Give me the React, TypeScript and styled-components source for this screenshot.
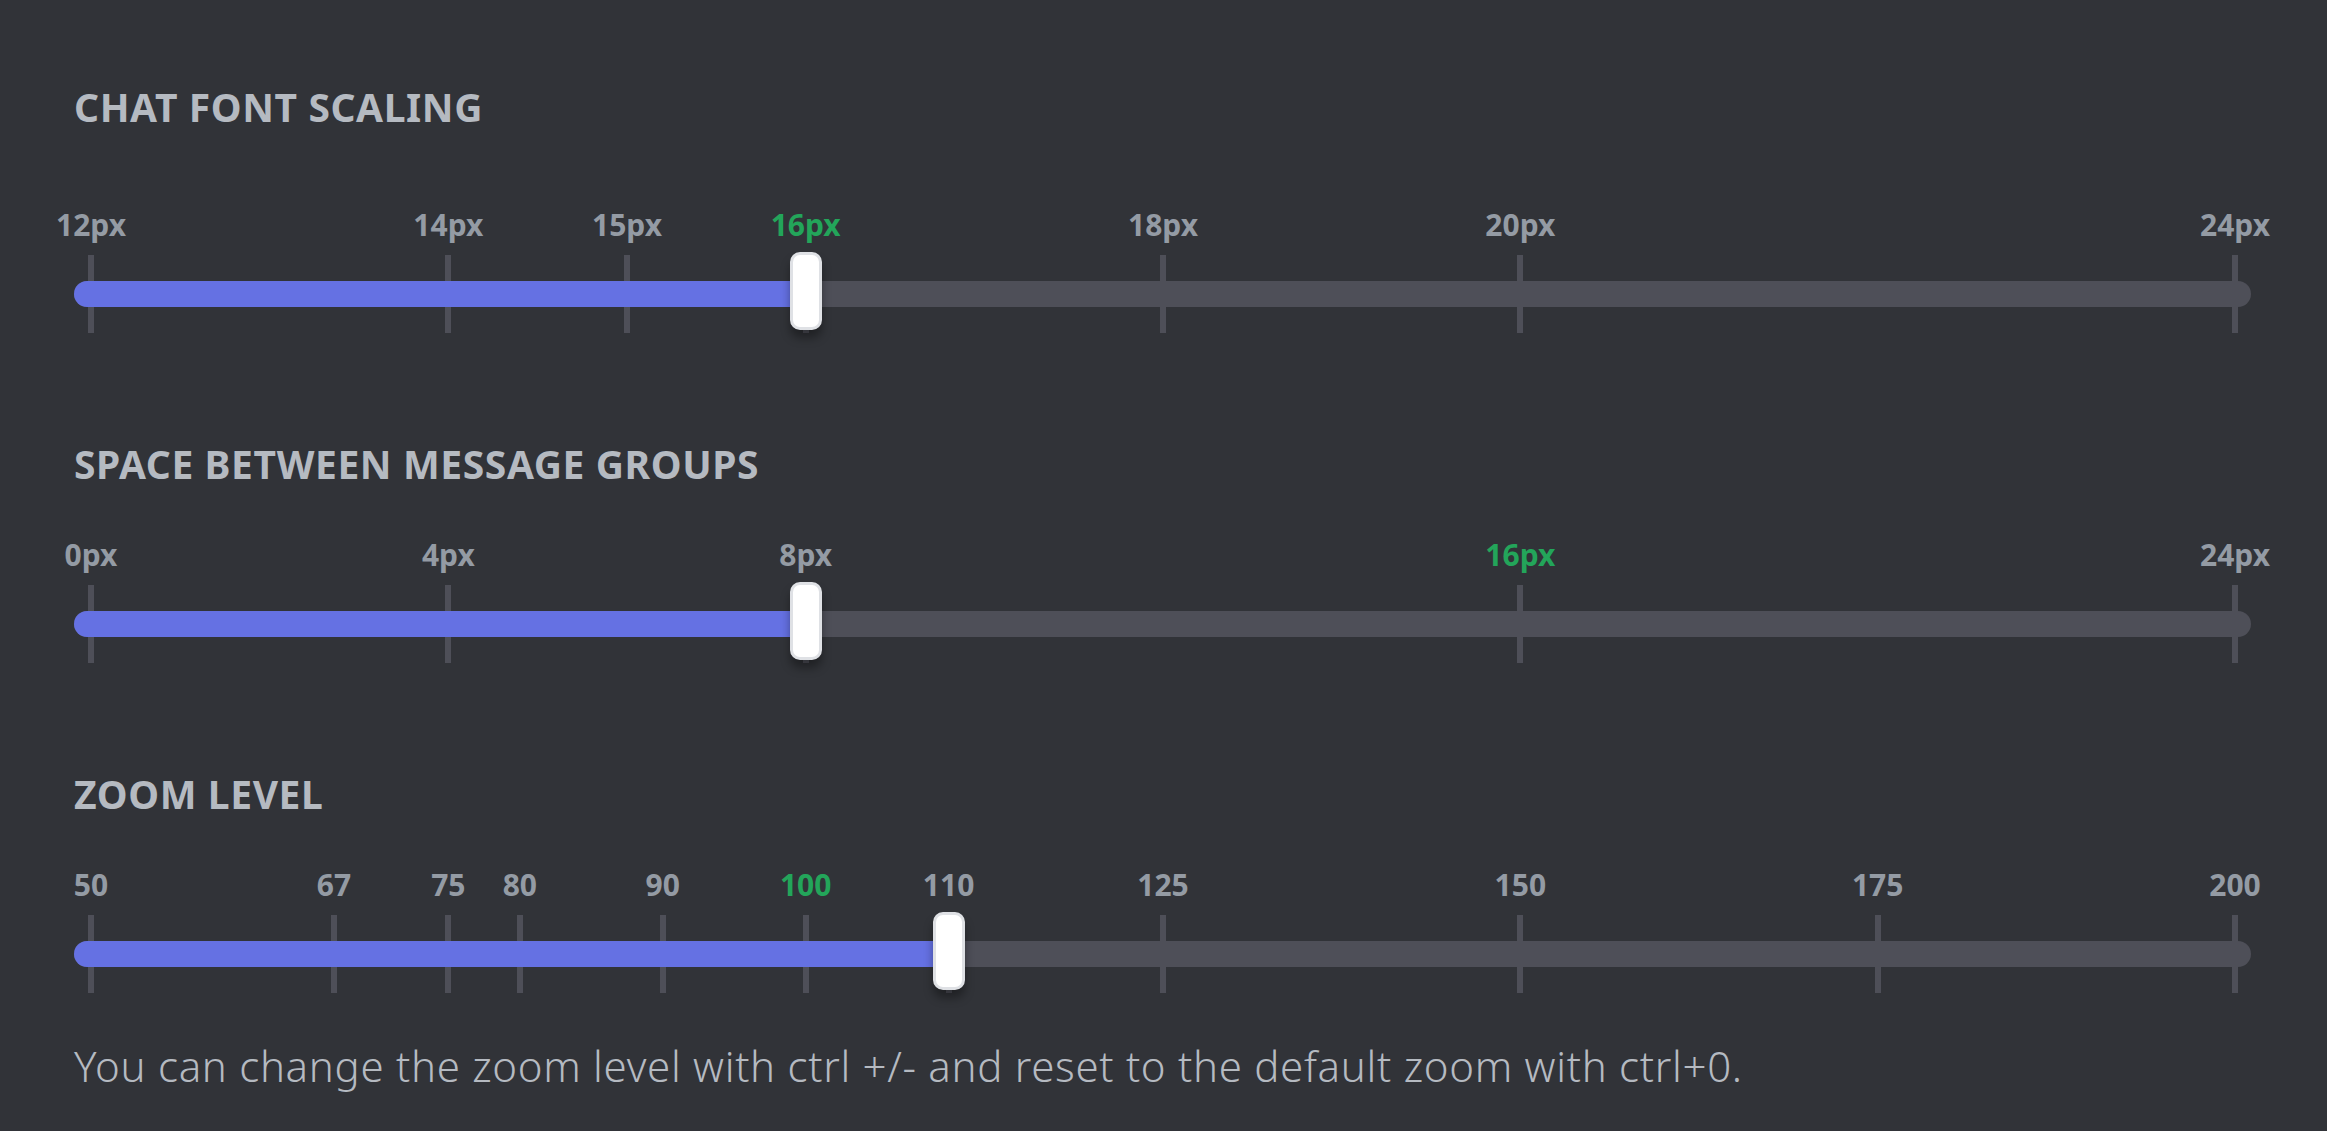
import React from 'react';
import styled, { createGlobalStyle } from 'styled-components';

const GlobalStyle = createGlobalStyle`
  html, body {
    margin: 0;
    padding: 0;
    background: #313338;
  }
`;

const Page = styled.div`
  font-family: 'Noto Sans', 'Open Sans', sans-serif;
  background: #313338;
  min-height: 100vh;
  box-sizing: border-box;
  padding: 83px 76px 0 74px;
`;

const Section = styled.section<{ $gap: number }>`
  display: flex;
  flex-direction: column;
  margin-bottom: ${p => p.$gap}px;
`;

const Title = styled.h2<{ $space: number }>`
  margin: 0 0 ${p => p.$space}px;
  font-size: 39px;
  line-height: 48px;
  letter-spacing: 0.6px;
  font-weight: 700;
  color: #b5bac1;
  text-transform: uppercase;
`;

const Slider = styled.div`
  display: flex;
  flex-direction: column;
`;

const Labels = styled.div`
  position: relative;
  height: 36px;
  margin: 0 16px 0 17px;
`;

const Label = styled.span<{ $active?: boolean }>`
  position: absolute;
  top: 0;
  transform: translateX(-50%);
  font-size: 30px;
  line-height: 36px;
  font-weight: 700;
  white-space: nowrap;
  color: ${p => (p.$active ? '#23a55a' : '#949ba4')};
`;

const Rail = styled.div`
  position: relative;
  height: 80px;
  margin-top: 11px;
  display: flex;
  align-items: center;
`;

const Track = styled.div`
  position: relative;
  flex: 1;
  height: 26px;
  border-radius: 13px;
  background: #4e4f58;
  overflow: hidden;
`;

const Fill = styled.div`
  height: 100%;
  background: #6571e3;
`;

const Ticks = styled.div`
  position: absolute;
  top: 0;
  bottom: 0;
  left: 17px;
  right: 16px;
`;

const Tick = styled.div`
  position: absolute;
  top: 1px;
  width: 6px;
  height: 78px;
  margin-left: -3px;
  background: #4e4f58;
`;

const Knob = styled.div`
  position: absolute;
  top: -2px;
  width: 32px;
  height: 78px;
  margin-left: -16px;
  box-sizing: border-box;
  background: #ffffff;
  border: 3px solid #dfe1e5;
  border-radius: 10px;
  box-shadow: 0 8px 10px rgba(0, 0, 0, 0.35);
`;

const Note = styled.p`
  margin: 0;
  font-size: 42px;
  line-height: 52px;
  letter-spacing: 0.7px;
  font-weight: 300;
  color: #b5bac1;
`;

type Mark = { value: number; label: string };

type ScaleProps = {
  marks: Mark[];
  value: number;
  defaultValue: number;
};

const Scale = ({ marks, value, defaultValue }: ScaleProps) => {
  const min = marks[0].value;
  const max = marks[marks.length - 1].value;
  const pct = (v: number) => ((v - min) / (max - min)) * 100;
  const knobAt = pct(value);

  return (
    <Slider>
      <Labels>
        {marks.map(m => (
          <Label key={m.label} $active={m.value === defaultValue} style={{ left: `${pct(m.value)}%` }}>
            {m.label}
          </Label>
        ))}
      </Labels>
      <Rail>
        <Ticks>
          {marks.map(m => (
            <Tick key={m.label} style={{ left: `${pct(m.value)}%` }} />
          ))}
        </Ticks>
        <Track>
          <Fill style={{ width: `calc(17px + (100% - 33px) * ${knobAt / 100})` }} />
        </Track>
        <Ticks>
          <Knob style={{ left: `${knobAt}%` }} />
        </Ticks>
      </Rail>
    </Slider>
  );
};

const px = (vals: number[]) => vals.map(v => ({ value: v, label: `${v}px` }));

const fontMarks = px([12, 14, 15, 16, 18, 20, 24]);
const spaceMarks = px([0, 4, 8, 16, 24]);
const zoomMarks = [50, 67, 75, 80, 90, 100, 110, 125, 150, 175, 200].map(v => ({ value: v, label: `${v}` }));

const App = () => {
  return (
    <Page>
      <GlobalStyle />
      <Section $gap={106}>
        <Title $space={76}>Chat Font Scaling</Title>
        <Scale marks={fontMarks} value={16} defaultValue={16} />
      </Section>
      <Section $gap={106}>
        <Title $space={49}>Space Between Message Groups</Title>
        <Scale marks={spaceMarks} value={8} defaultValue={16} />
      </Section>
      <Section $gap={46}>
        <Title $space={49}>Zoom Level</Title>
        <Scale marks={zoomMarks} value={110} defaultValue={100} />
      </Section>
      <Note>You can change the zoom level with ctrl +/- and reset to the default zoom with ctrl+0.</Note>
    </Page>
  );
};

export default App;
